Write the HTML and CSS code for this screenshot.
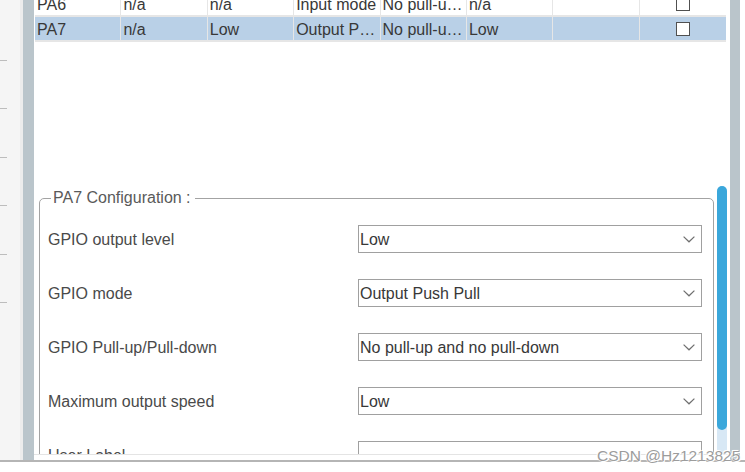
FILE: index.html
```html
<!DOCTYPE html>
<html>
<head>
<meta charset="utf-8">
<link rel="stylesheet" href="styles.css">
</head>
<body>
<div class="screen">
  <div class="frame">
    <div class="gutter">
      <span class="tick"></span><span class="tick"></span><span class="tick"></span>
      <span class="tick"></span><span class="tick"></span><span class="tick"></span>
    </div>
    <div class="sash"></div>
    <div class="main">
      <div class="pins">
        <div class="pin-table">
          <div class="row">
            <div class="cell">PA6</div><div class="cell">n/a</div><div class="cell">n/a</div><div class="cell">Input mode</div><div class="cell">No pull-u…</div><div class="cell">n/a</div><div class="cell"></div><div class="cell check-cell"><span class="checkbox"></span></div>
          </div>
          <div class="row selected">
            <div class="cell">PA7</div><div class="cell">n/a</div><div class="cell">Low</div><div class="cell">Output P…</div><div class="cell">No pull-u…</div><div class="cell">Low</div><div class="cell"></div><div class="cell check-cell"><span class="checkbox"></span></div>
          </div>
        </div>
      </div>
      <div class="config">
        <fieldset class="cfg">
          <legend class="cfg-title">PA7 Configuration :</legend>
          <div class="form">
            <div class="label">GPIO output level</div>
            <div class="select"><span class="val">Low</span><svg class="chev" width="12" height="7" viewBox="0 0 12 7"><path d="M0.6 0.6 L6 5.8 L11.4 0.6" fill="none" stroke="#6f6f6f" stroke-width="1.2"/></svg></div>
            <div class="label">GPIO mode</div>
            <div class="select"><span class="val">Output Push Pull</span><svg class="chev" width="12" height="7" viewBox="0 0 12 7"><path d="M0.6 0.6 L6 5.8 L11.4 0.6" fill="none" stroke="#6f6f6f" stroke-width="1.2"/></svg></div>
            <div class="label">GPIO Pull-up/Pull-down</div>
            <div class="select"><span class="val">No pull-up and no pull-down</span><svg class="chev" width="12" height="7" viewBox="0 0 12 7"><path d="M0.6 0.6 L6 5.8 L11.4 0.6" fill="none" stroke="#6f6f6f" stroke-width="1.2"/></svg></div>
            <div class="label">Maximum output speed</div>
            <div class="select"><span class="val">Low</span><svg class="chev" width="12" height="7" viewBox="0 0 12 7"><path d="M0.6 0.6 L6 5.8 L11.4 0.6" fill="none" stroke="#6f6f6f" stroke-width="1.2"/></svg></div>
            <div class="label">User Label</div>
            <div class="select input"></div>
          </div>
        </fieldset>
        <div class="vscroll"><div class="thumb"></div></div>
      </div>
    </div>
    <div class="rbar"></div>
    <div class="redge"></div>
  </div>
  <div class="statusline"></div>
  <div class="watermark">CSDN @Hz1213825</div>
</div>
</body>
</html>
```

FILE: styles.css
```css
* { box-sizing: border-box; }
html, body {
  margin: 0;
  padding: 0;
  background: #ffffff;
  font-family: "Liberation Sans", Arial, sans-serif;
  font-size: 16px;
}
.screen {
  position: relative;
  width: 745px;
  height: 472px;
  overflow: hidden;
}
.frame {
  display: flex;
  height: 460px;
}
.gutter {
  width: 23px;
  flex: 0 0 23px;
  background: #f5f5f5;
  border-right: 3px solid #ececec;
  display: flex;
  flex-direction: column;
  padding-top: 60px;
  gap: 47.4px;
}
.tick {
  display: block;
  width: 7px;
  height: 1px;
  background: #bdbdbd;
}
.sash {
  flex: 0 0 11px;
  background: #bac5cb;
}
.main {
  flex: 0 0 696px;
  display: flex;
  flex-direction: column;
  background: #fff;
  overflow: hidden;
}
.pins {
  flex: 0 0 183px;
  overflow: hidden;
}
.pin-table {
  width: 691px;
  margin: -8px 0 0 1px;
}
.row {
  display: grid;
  grid-template-columns: repeat(8, 1fr);
  height: 25px;
  border-bottom: 2px solid #e6e6e6;
  color: #383838;
}
.row.selected {
  background: #b9d0e7;
}
.cell {
  padding: 1px 0 0 2px;
  line-height: 23px;
  white-space: nowrap;
  overflow: hidden;
  border-right: 1px solid #e6e6e6;
}
.cell:last-child { border-right: none; }
.check-cell {
  display: flex;
  align-items: center;
  justify-content: center;
  padding: 0;
}
.checkbox {
  display: block;
  width: 14px;
  height: 14px;
  background: #fff;
  border: 1px solid #505050;
}
.config {
  flex: 0 0 272px;
  display: flex;
  gap: 3px;
  border-bottom: 1px solid #e4e4e4;
  overflow: hidden;
}
.cfg {
  flex: 0 0 675px;
  margin: 6px 0 0 5px;
  padding: 18px 11px 20px 8px;
  border: 1px solid #a3a3a3;
  border-radius: 5px;
  min-width: 0;
  height: 320px;
}
.cfg-title {
  margin-left: 3px;
  padding: 0 4px 0 2px;
  line-height: 18px;
  color: #5a5a5a;
  font-size: 16px;
}
.form {
  display: grid;
  grid-template-columns: 310px 344px;
  grid-auto-rows: 28px;
  row-gap: 26px;
  align-items: center;
}
.label {
  color: #4a4a4a;
  white-space: nowrap;
  padding-top: 2px;
}
.select {
  height: 28px;
  border: 1px solid #a0a0a0;
  display: flex;
  align-items: center;
  justify-content: space-between;
  padding: 0 6px 0 1px;
  color: #383838;
  background: #fff;
}
.val { padding-top: 2px; }
.chev { display: block; margin-top: 1px; }
.vscroll {
  flex: 0 0 10px;
  margin-top: 3px;
  background: #d8e8f5;
  border-radius: 5px 5px 0 0;
}
.thumb {
  height: 244px;
  background: #3aa7db;
  border-radius: 5px;
}
.rbar {
  flex: 0 0 10px;
  background: #bac5cb;
}
.redge {
  flex: 1 1 auto;
  background: #fff;
}
.statusline {
  height: 2px;
  background: #b5b5b5;
}
.watermark {
  position: absolute;
  left: 597px;
  top: 447px;
  font-size: 15.5px;
  line-height: 18px;
  color: #9c9c9c;
  white-space: nowrap;
  text-shadow: 0 0 1px #fff, 0 0 2px #fff, 1px 1px 0 #fff, -1px -1px 0 #fff;
}
```
